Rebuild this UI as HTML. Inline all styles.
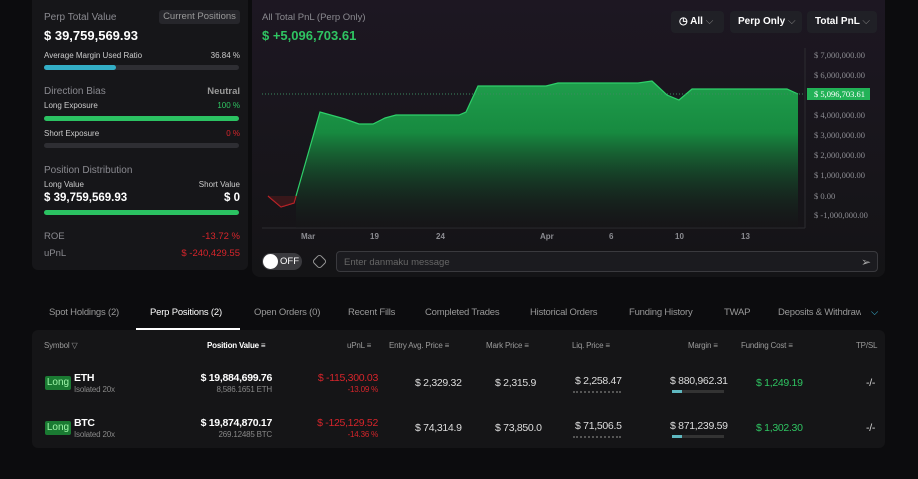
<!DOCTYPE html>
<html><head><meta charset="utf-8"><style>
*{box-sizing:border-box;margin:0;padding:0}
body{width:918px;height:479px;background:#0c0c0e;font-family:"Liberation Sans",sans-serif;color:#e8e8e8;position:relative;overflow:hidden;font-size:9px}
.abs{position:absolute}
.lp{left:32px;top:0;width:216px;height:270px;background:#161619;border-radius:0 0 6px 6px}
.g{color:#8a8a90}
.bar{position:absolute;left:12px;width:195px;height:5px;border-radius:3px;background:#2e2e33}
.cp{left:252px;top:0;width:633px;height:277px;background:linear-gradient(#1d1722,#141416);border-radius:0 0 8px 8px}
.btn{position:absolute;top:11px;height:22px;background:#202026;border-radius:4px;font-weight:bold;font-size:10px;color:#fff;line-height:22px;padding-left:8px}
.yl{position:absolute;left:814px;font-size:8.5px;color:#8c8c92;font-family:"Liberation Serif",serif}
.xl{position:absolute;top:232px;font-size:8px;color:#8c8c92;font-weight:bold}
.tab{position:absolute;top:307px;font-size:9.5px;color:#999;letter-spacing:-0.2px}
.tbl{left:32px;top:330px;width:853px;height:118px;background:#151517;border-radius:6px}
.h{position:absolute;top:341px;font-size:8px;color:#9a9a9a;letter-spacing:-0.2px}
.c{position:absolute;font-size:10.5px;color:#ddd;letter-spacing:-0.3px}
.s{position:absolute;font-size:8px;color:#888;letter-spacing:-0.2px}
.long{position:absolute;left:45px;width:26px;height:14px;background:#1a7a32;color:#9ef5a8;font-size:10px;line-height:14px;text-align:center;border-radius:2px}
.red{color:#d6252b}.grn{color:#2fc462}
</style></head><body>
<div class="abs lp">
 <div class="abs g" style="left:12px;top:12px;font-size:10px">Perp Total Value</div>
 <div class="abs" style="left:127px;top:10px;width:81px;height:14px;background:#26262b;border-radius:3px;font-size:9.5px;color:#999;text-align:center;line-height:14px">Current Positions</div>
 <div class="abs" style="left:12px;top:28px;font-size:13px;font-weight:bold;color:#fff">$ 39,759,569.93</div>
 <div class="abs" style="left:12px;top:51px;font-size:8px;color:#ccc">Average Margin Used Ratio</div>
 <div class="abs" style="right:8px;top:51px;font-size:8px;color:#ccc">36.84 %</div>
 <div class="bar" style="top:65px"><div style="width:72px;height:5px;background:#33aec6;border-radius:3px"></div></div>
 <div class="abs g" style="left:12px;top:86px;font-size:10px">Direction Bias</div>
 <div class="abs" style="right:8px;top:86px;font-size:9.5px;color:#999;font-weight:bold">Neutral</div>
 <div class="abs" style="left:12px;top:101px;font-size:8px;color:#ccc">Long Exposure</div>
 <div class="abs grn" style="right:8px;top:101px;font-size:8px">100 %</div>
 <div class="bar" style="top:116px;background:#2bc262"></div>
 <div class="abs" style="left:12px;top:129px;font-size:8px;color:#ccc">Short Exposure</div>
 <div class="abs red" style="right:8px;top:129px;font-size:8px">0 %</div>
 <div class="bar" style="top:143px"></div>
 <div class="abs g" style="left:12px;top:165px;font-size:10px">Position Distribution</div>
 <div class="abs" style="left:12px;top:180px;font-size:8px;color:#ccc">Long Value</div>
 <div class="abs" style="right:8px;top:180px;font-size:8px;color:#ccc">Short Value</div>
 <div class="abs" style="left:12px;top:192px;font-size:11.5px;font-weight:bold;color:#fff">$ 39,759,569.93</div>
 <div class="abs" style="right:8px;top:192px;font-size:11.5px;font-weight:bold;color:#fff">$ 0</div>
 <div class="bar" style="top:210px;background:#2bc262"></div>
 <div class="abs g" style="left:12px;top:231px;font-size:9.5px">ROE</div>
 <div class="abs red" style="right:8px;top:231px;font-size:9.5px">-13.72 %</div>
 <div class="abs g" style="left:12px;top:248px;font-size:9.5px">uPnL</div>
 <div class="abs red" style="right:8px;top:248px;font-size:9.5px">$ -240,429.55</div>
</div>
<div class="abs cp"></div>
<div class="abs g" style="left:262px;top:12px;font-size:9.5px">All Total PnL (Perp Only)</div>
<div class="abs grn" style="left:262px;top:28px;font-size:13px;font-weight:bold">$ +5,096,703.61</div>
<div class="btn" style="left:671px;width:53px">◷ All <span style="color:#888;font-weight:normal">⌵</span></div>
<div class="btn" style="left:730px;width:72px">Perp Only <span style="color:#888;font-weight:normal">⌵</span></div>
<div class="btn" style="left:807px;width:70px">Total PnL <span style="color:#888;font-weight:normal">⌵</span></div>
<svg class="abs" style="left:0;top:0" width="918" height="279">
<defs><linearGradient id="gr" x1="0" y1="0" x2="0" y2="1"><stop offset="0" stop-color="#1f9e4c"/><stop offset="0.35" stop-color="#178a40"/><stop offset="1" stop-color="#151517" stop-opacity="0.2"/></linearGradient></defs>
<line x1="262" y1="228" x2="805" y2="228" stroke="#2c2c30"/>
<line x1="805" y1="48" x2="805" y2="228" stroke="#2c2c30"/>
<path d="M296,196 L320,112 L345,119 L359,124 L373,124 L385,118 L396,115 L459,115 L466,112 L478,86 L546,86 L558,83 L638,83 L652,81 L667,95 L679,100 L692,89 L787,89 L798,94 L798,228 L296,228Z" fill="url(#gr)"/>
<path d="M296,196 L320,112 L345,119 L359,124 L373,124 L385,118 L396,115 L459,115 L466,112 L478,86 L546,86 L558,83 L638,83 L652,81 L667,95 L679,100 L692,89 L787,89 L798,94" fill="none" stroke="#2ed06a" stroke-width="1.2"/>
<path d="M268,196 L281,207 L294,203 L296,196" fill="none" stroke="#d6252b" stroke-width="1.2"/>
<path d="M268,196 L281,207 L294,203 L296,196Z" fill="#5a1a1c" opacity="0.5"/>
<line x1="262" y1="94" x2="805" y2="94" stroke="#3a8a60" stroke-dasharray="1,2"/>
<rect x="807" y="88" width="63" height="12" fill="#22b257"/>
</svg>
<div class="yl" style="top:50px">$ 7,000,000.00</div>
<div class="yl" style="top:70px">$ 6,000,000.00</div>
<div class="yl" style="top:89px;color:#fff">$ 5,096,703.61</div>
<div class="yl" style="top:110px">$ 4,000,000.00</div>
<div class="yl" style="top:130px">$ 3,000,000.00</div>
<div class="yl" style="top:150px">$ 2,000,000.00</div>
<div class="yl" style="top:170px">$ 1,000,000.00</div>
<div class="yl" style="top:191px">$ 0.00</div>
<div class="yl" style="top:210px">$ -1,000,000.00</div>
<div class="xl" style="left:301px">Mar</div><div class="xl" style="left:370px">19</div><div class="xl" style="left:436px">24</div><div class="xl" style="left:540px">Apr</div><div class="xl" style="left:609px">6</div><div class="xl" style="left:675px">10</div><div class="xl" style="left:741px">13</div>
<div class="abs" style="left:262px;top:253px;width:40px;height:17px;background:#3a3a3e;border-radius:9px"><div style="position:absolute;left:1px;top:1px;width:15px;height:15px;border-radius:50%;background:#fff"></div><span style="position:absolute;left:18px;top:3px;font-size:9.5px;color:#fff">OFF</span></div>
<div class="abs" style="left:314px;top:256px;width:11px;height:11px;border:1px solid #999;border-radius:3px;transform:rotate(45deg)"></div>
<div class="abs" style="left:336px;top:251px;width:542px;height:21px;background:#1b1b1f;border:1px solid #3a3a3e;border-radius:4px;font-size:9.5px;color:#666;padding:5px 7px">Enter danmaku message<span style="position:absolute;right:6px;top:3px;color:#aaa;font-size:12px">➢</span></div>
<div class="tab" style="left:49px">Spot Holdings (2)</div>
<div class="tab" style="left:150px;color:#fff">Perp Positions (2)</div>
<div class="abs" style="left:136px;top:328px;width:104px;height:2px;background:#fff"></div>
<div class="tab" style="left:254px">Open Orders (0)</div>
<div class="tab" style="left:348px">Recent Fills</div>
<div class="tab" style="left:425px">Completed Trades</div>
<div class="tab" style="left:530px">Historical Orders</div>
<div class="tab" style="left:629px">Funding History</div>
<div class="tab" style="left:724px">TWAP</div>
<div class="tab" style="left:778px;width:83px;overflow:hidden;white-space:nowrap">Deposits &amp; Withdrawals</div>
<div class="tab" style="left:871px;color:#3ab0d0">⌵</div>
<div class="abs tbl"></div>
<div class="h" style="left:44px">Symbol ▽</div>
<div class="h" style="left:207px;color:#fff;font-weight:bold">Position Value ≡</div>
<div class="h" style="left:347px">uPnL ≡</div>
<div class="h" style="left:389px">Entry Avg. Price ≡</div>
<div class="h" style="left:486px">Mark Price ≡</div>
<div class="h" style="left:572px">Liq. Price ≡</div>
<div class="h" style="left:688px">Margin ≡</div>
<div class="h" style="left:741px">Funding Cost ≡</div>
<div class="h" style="left:856px">TP/SL</div>
<div class="long" style="top:376px">Long</div>
<div class="c" style="left:74px;top:372px;font-weight:bold;color:#fff">ETH</div>
<div class="s" style="left:74px;top:385px">Isolated 20x</div>
<div class="c" style="right:646px;top:372px;font-weight:bold;color:#fff">$ 19,884,699.76</div>
<div class="s" style="right:646px;top:385px">8,586.1651 ETH</div>
<div class="c red" style="right:540px;top:372px">$ -115,300.03</div>
<div class="s red" style="right:540px;top:385px">-13.09 %</div>
<div class="c" style="left:415px;top:377px">$ 2,329.32</div>
<div class="c" style="left:495px;top:377px">$ 2,315.9</div>
<div class="c" style="left:575px;top:375px">$ 2,258.47</div>
<div class="abs" style="left:573px;top:391px;width:48px;border-top:2px dotted #555"></div>
<div class="c" style="left:670px;top:375px">$ 880,962.31</div>
<div class="abs" style="left:672px;top:390px;width:52px;height:3px;background:#333"><div style="width:10px;height:3px;background:#5fb8c0"></div></div>
<div class="c grn" style="left:756px;top:377px">$ 1,249.19</div>
<div class="c" style="left:866px;top:377px">-/-</div>
<div class="long" style="top:421px">Long</div>
<div class="c" style="left:74px;top:417px;font-weight:bold;color:#fff">BTC</div>
<div class="s" style="left:74px;top:430px">Isolated 20x</div>
<div class="c" style="right:646px;top:417px;font-weight:bold;color:#fff">$ 19,874,870.17</div>
<div class="s" style="right:646px;top:430px">269.12485 BTC</div>
<div class="c red" style="right:540px;top:417px">$ -125,129.52</div>
<div class="s red" style="right:540px;top:430px">-14.36 %</div>
<div class="c" style="left:415px;top:422px">$ 74,314.9</div>
<div class="c" style="left:495px;top:422px">$ 73,850.0</div>
<div class="c" style="left:575px;top:420px">$ 71,506.5</div>
<div class="abs" style="left:573px;top:436px;width:48px;border-top:2px dotted #555"></div>
<div class="c" style="left:670px;top:420px">$ 871,239.59</div>
<div class="abs" style="left:672px;top:435px;width:52px;height:3px;background:#333"><div style="width:10px;height:3px;background:#5fb8c0"></div></div>
<div class="c grn" style="left:756px;top:422px">$ 1,302.30</div>
<div class="c" style="left:866px;top:422px">-/-</div>
</body></html>
